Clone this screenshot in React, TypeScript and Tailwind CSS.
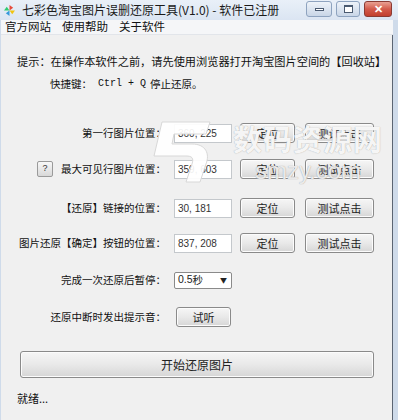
import React from "react";

const cjk = { fontFamily: '"Noto Sans CJK SC", "Liberation Sans", sans-serif' };
const num = { fontFamily: '"Liberation Sans", "Noto Sans CJK SC", sans-serif' };

const WinButton = ({ label, className = "" }: { label: string; className?: string }) => (
  <div
    className={`flex items-center justify-center h-[20px] rounded-[3px] border border-[#8a8a8a] bg-gradient-to-b from-[#f6f6f6] via-[#e9e9e9] to-[#d6d6d6] text-[11px] text-[#222] shadow-[inset_0_0_0_1px_#fcfcfc] ${className}`}
    style={cjk}
  >
    {label}
  </div>
);

const ValueBox = ({ value }: { value: string }) => (
  <div
    className="w-[58px] h-[19px] bg-white border border-[#c4c8cc] flex items-center pl-[3px] text-[10px] text-[#333]"
    style={num}
  >
    {value}
  </div>
);

const Row = ({
  label,
  value,
  className = "",
  help = false,
}: {
  label: string;
  value: string;
  className?: string;
  help?: boolean;
}) => (
  <div className={`flex items-center h-[20px] ${className}`}>
    <div className="w-[165px] flex items-center justify-end">
      {help && (
        <div className="mr-auto ml-[36px] w-[16px] h-[16px] rounded-[2px] border border-[#9a9a9a] bg-gradient-to-b from-[#f8f8f8] to-[#d8d8d8] flex items-center justify-center text-[9px] text-[#333]" style={num}>
          ?
        </div>
      )}
      <span className="text-[10.5px] text-[#111] whitespace-nowrap" style={cjk}>
        {label}
      </span>
    </div>
    <div className="ml-[8px]">
      <ValueBox value={value} />
    </div>
    <WinButton label="定位" className="ml-[8px] w-[55px]" />
    <WinButton label="测试点击" className="ml-[10px] w-[69px]" />
  </div>
);

const Pinwheel = () => (
  <svg width="11" height="11" viewBox="0 0 12 12">
    <path d="M6 6 L6 0 L10 3 Z" fill="#e74c3c" />
    <path d="M6 6 L12 6 L9 10 Z" fill="#f1c40f" />
    <path d="M6 6 L6 12 L2 9 Z" fill="#3498db" />
    <path d="M6 6 L0 6 L3 2 Z" fill="#2ecc71" />
  </svg>
);

export default function App() {
  return (
    <div className="relative w-[398px] h-[420px] overflow-hidden bg-[#cfdbea] flex flex-col" style={cjk}>
      {/* title bar */}
      <div className="h-[20px] flex items-center bg-gradient-to-b from-[#e9f0f8] to-[#dbe5f2] pl-[4px]">
        <Pinwheel />
        <span className="ml-[7px] text-[12px] text-[#1a1a1a] whitespace-nowrap">
          七彩色淘宝图片误删还原工具(V1.0) - 软件已注册
        </span>
        <div className="ml-auto flex items-start self-start pt-[1px] pr-[6px] gap-[4px]">
          <div className="w-[26px] h-[16px] rounded-[3px] border border-[#8ea3bf] bg-gradient-to-b from-[#eef3f9] to-[#c9d6e7] flex items-center justify-center">
            <div className="w-[9px] h-[3px] bg-white border border-[#4a5a70]" />
          </div>
          <div className="w-[24px] h-[16px] rounded-[3px] border border-[#8ea3bf] bg-gradient-to-b from-[#eef3f9] to-[#c9d6e7] flex items-center justify-center">
            <div className="w-[9px] h-[8px] bg-white border border-[#4a5a70] border-t-2" />
          </div>
          <div className="w-[28px] h-[16px] rounded-[3px] border border-[#8a3b34] bg-gradient-to-b from-[#e8a093] via-[#d35b4c] to-[#c2402f] flex items-center justify-center text-white text-[11px] font-bold leading-none" style={num}>
            ✕
          </div>
        </div>
      </div>

      {/* menu bar */}
      <div className="h-[15px] ml-[1px] mr-[5px] bg-[#f5f6f8] flex items-center text-[11.5px] text-[#111] gap-[11px] pl-[4px] border-b border-[#e2e5ea]">
        <span>官方网站</span>
        <span>使用帮助</span>
        <span>关于软件</span>
      </div>

      {/* client area */}
      <div className="flex-1 ml-[1px] mr-[5px] bg-[#f0f0f0] flex flex-col border-r border-[#5b6573]">
        <div className="mt-[19px] pl-[16px] text-[11.2px] text-[#111] whitespace-nowrap leading-[14px]">
          提示：在操作本软件之前，请先使用浏览器打开淘宝图片空间的【回收站】
        </div>
        <div className="mt-[9px] pl-[49px] text-[10.5px] text-[#111] whitespace-nowrap leading-[14px] flex items-center">
          <span>快捷键：</span>
          <span className="ml-[6px] text-[10px]" style={{ fontFamily: '"Liberation Mono", monospace' }}>
            Ctrl + Q
          </span>
          <span className="ml-[4px]">停止还原。</span>
        </div>

        <Row label="第一行图片位置：" value="360, 225" className="mt-[32px]" />
        <Row label="最大可见行图片位置：" value="359, 603" className="mt-[16px]" help />
        <Row label="【还原】链接的位置：" value="30, 181" className="mt-[19px]" />
        <Row label="图片还原【确定】按钮的位置：" value="837, 208" className="mt-[15px]" />

        <div className="flex items-center h-[20px] mt-[17px]">
          <div className="w-[165px] text-right text-[10.5px] text-[#111] whitespace-nowrap">
            完成一次还原后暂停：
          </div>
          <div className="ml-[8px] w-[58px] h-[17px] bg-white border border-[#8a8a8a] rounded-[2px] flex items-center pl-[3px] pr-[4px] text-[10.5px] text-[#222]">
            <span style={num}>0.5</span>
            <span>秒</span>
            <span className="ml-auto text-[7px] text-[#222]">▼</span>
          </div>
        </div>

        <div className="flex items-center h-[20px] mt-[17px]">
          <div className="w-[165px] text-right text-[10.5px] text-[#111] whitespace-nowrap">
            还原中断时发出提示音：
          </div>
          <WinButton label="试听" className="ml-[10px] w-[55px] h-[19px]" />
        </div>

        <WinButton label="开始还原图片" className="mt-[24px] ml-[19px] w-[354px] h-[27px] text-[12px]" />

        <div className="mt-[12px] pl-[16px] text-[11px] text-[#111]">就绪...</div>
      </div>

      {/* site watermark overlay */}
      <div className="absolute left-[148px] top-[118px] pointer-events-none">
        <svg width="70" height="68" viewBox="0 0 70 68">
          <path d="M14 4 L62 4 L58 16 L26 16 L24 26 L44 26 C58 26 62 36 58 46 L52 64 L38 64 L44 46 C46 40 44 38 38 38 L6 38 Z" fill="white" fillOpacity="0.92" stroke="#d8d8d8" strokeWidth="1" />
        </svg>
      </div>
      <div className="absolute left-[233px] top-[124px] pointer-events-none flex flex-col items-center">
        <span className="text-[29px] font-bold text-white/90 tracking-[1px] leading-none [text-shadow:0_0_1px_#9a9a9a]">数码资源网</span>
        <span className="mt-[6px] text-[24px] text-white/80 leading-none [text-shadow:0_0_1px_#8a8a8a]" style={num}>smzy.com</span>
      </div>
    </div>
  );
}
